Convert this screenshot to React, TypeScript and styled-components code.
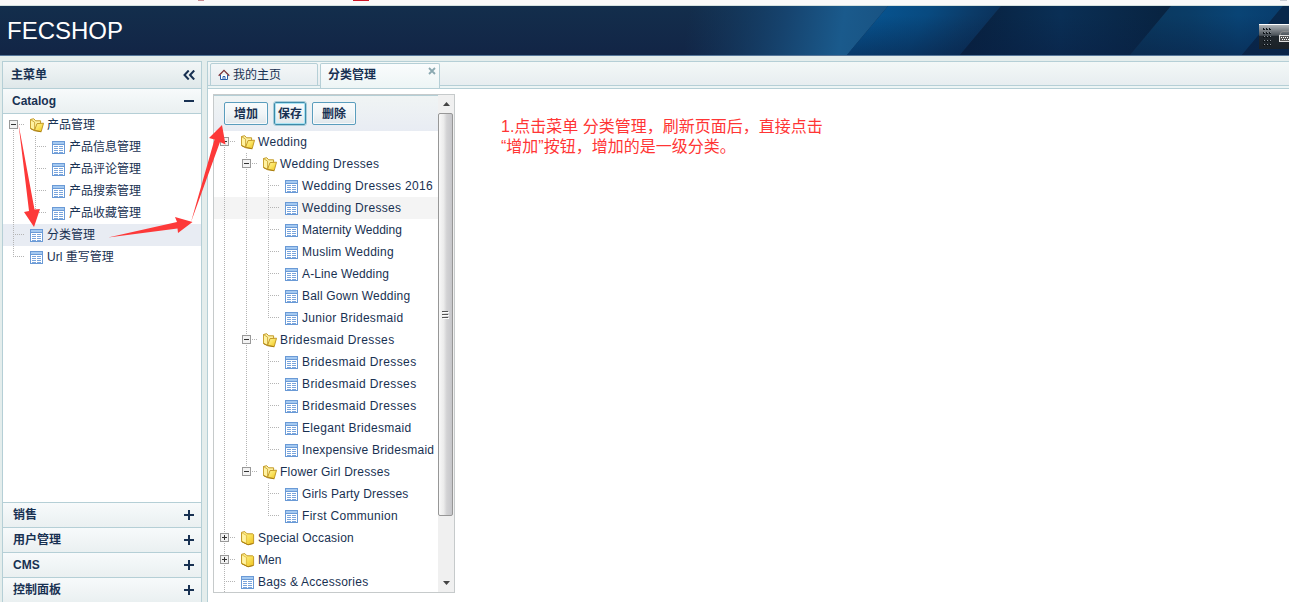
import React from 'react';
import styled, { createGlobalStyle, css } from 'styled-components';

const Global = createGlobalStyle`
  * { box-sizing: border-box; }
  html, body { margin: 0; padding: 0; overflow: hidden; }
  body { font: 12px/22px "Liberation Sans", "Noto Sans CJK SC", sans-serif; color: #183152; background: #e4edec; }
`;

const line = '#b5cfd6';

const Page = styled.div`
  position: relative;
  width: 1289px;
  height: 602px;
  display: flex;
  flex-direction: column;
  overflow: hidden;
`;
const BrowserEdge = styled.div`
  height: 6px;
  flex: none;
  background: #f9f9f9;
  border-bottom: 1px solid #d5e2e0;
  svg { display: block; }
`;
const Header = styled.header`
  position: relative;
  height: 50px;
  flex: none;
  border-bottom: 1px solid #56779a;
  background: #12294a;
  padding: 11px 7px 0;
`;
const Artwork = styled.svg`
  position: absolute;
  left: 0;
  top: 0;
`;
const Brand = styled.h1`
  position: relative;
  margin: 0;
  font-size: 24px;
  line-height: 28px;
  font-weight: 400;
  color: #fff;
`;
const Main = styled.div`
  flex: 1;
  min-height: 0;
  display: flex;
  gap: 5px;
  padding: 5px 0 0 2px;
`;

const Sidebar = styled.aside`
  width: 200px;
  flex: none;
  display: flex;
  flex-direction: column;
  border: 1px solid ${line};
  border-bottom: 0;
  background: #fff;
`;
const SideTitle = styled.div`
  height: 26px;
  flex: none;
  display: flex;
  align-items: center;
  justify-content: space-between;
  padding: 0 6px 0 8px;
  font-weight: 700;
  background: linear-gradient(#f2f6f7, #dfe8ea);
`;
const Section = styled.div<{ $open?: boolean }>`
  height: ${p => (p.$open ? 26 : 25)}px;
  flex: none;
  display: flex;
  align-items: center;
  justify-content: space-between;
  padding: 0 7px 0 ${p => (p.$open ? 9 : 10)}px;
  font-weight: 700;
  border-top: 1px solid ${line};
  ${p => p.$open && css`border-bottom: 1px solid ${line};`}
  background: linear-gradient(#f7fafb, #eaf0f1);
`;
const SideTree = styled.div`
  flex: 1;
  min-height: 0;
`;

const Workspace = styled.section`
  flex: 1;
  min-width: 0;
  display: flex;
  flex-direction: column;
  border: 1px solid ${line};
  border-width: 1px 0 0 1px;
  background: #fff;
`;
const TabBar = styled.div`
  height: 27px;
  flex: none;
  display: flex;
  gap: 2px;
  padding: 1px 2px 0;
  border-bottom: 1px solid ${line};
  background: linear-gradient(#f3f8f7, #e7edf0 23px, ${line} 23px, ${line} 24px, #edf5f5 24px);
`;
const Tab = styled.div<{ $active?: boolean; $w: number }>`
  width: ${p => p.$w}px;
  height: ${p => (p.$active ? 25 : 23)}px;
  display: flex;
  align-items: center;
  padding: 0 7px;
  gap: 3px;
  line-height: 22px;
  border: 1px solid ${line};
  border-radius: 2px 2px 0 0;
  background: linear-gradient(#f3f7f8, #e7edf0);
  ${p => p.$active && css`
    border-bottom: 0;
    font-weight: 700;
    background: linear-gradient(#fafcfd, #edf5f5);
    justify-content: space-between;
    align-items: flex-start;
    padding: 0 3px 0 7px;
  `}
`;
const CloseIcon = styled.svg`
  margin-top: 3px;
`;
const Content = styled.div`
  flex: 1;
  min-height: 0;
  display: flex;
  align-items: flex-start;
  padding: 5px;
`;
const Panel = styled.div`
  width: 242px;
  height: 499px;
  flex: none;
  display: flex;
  border: 1px solid #c6cacb;
  background: #fff;
`;
const PanelBody = styled.div`
  width: 224px;
  overflow: hidden;
`;
const Toolbar = styled.div`
  height: 36px;
  display: flex;
  align-items: flex-start;
  padding: 6px 10px 0;
  gap: 6px;
  border-top: 1px solid ${line};
  background: linear-gradient(#f0f4f4, #e8ecf3);
`;
const Button = styled.button<{ $focus?: boolean }>`
  width: ${p => (p.$focus ? 32 : 44)}px;
  height: 23px;
  padding: 0;
  border: 1px solid #5a9dbd;
  border-radius: 2px;
  font: inherit;
  line-height: 20px;
  font-weight: 700;
  color: #183152;
  background: linear-gradient(#f8fbfc, #f1f5f7 50%, #e0e7eb);
  box-shadow: inset 0 0 0 1px ${p => (p.$focus ? '#a8e3f4' : '#f8fafb')};
  ${p => p.$focus && css`outline: 1px solid #a9ccd9; border-color: #3d8aa9;`}
`;

const Row = styled.div<{ $bg?: string; }>`
  height: 22px;
  display: flex;
  align-items: center;
  white-space: nowrap;
  background: ${p => p.$bg || 'transparent'};
  svg { flex: none; display: block; }
`;
const Label = styled.span<{ $track?: number }>`
  letter-spacing: ${p => p.$track || 0}px;
`;

const Scrollbar = styled.div`
  width: 16px;
  height: 497px;
  display: flex;
  flex-direction: column;
  align-items: center;
  background: #f0f0f0;
`;
const ScrollEnd = styled.div`
  height: 18px;
  display: flex;
  align-items: center;
  justify-content: center;
`;
const Thumb = styled.div`
  width: 15px;
  height: 403px;
  align-self: flex-start;
  display: flex;
  align-items: center;
  justify-content: center;
  border: 1px solid #979797;
  border-radius: 2px;
  background: linear-gradient(90deg, #f8f8f8, #ececec 35%, #d2d2d4 60%, #c6c6ca);
`;
const Spacer = styled.div`
  flex: 1;
`;
const Note = styled.p`
  margin: 23px 0 0 46px;
  font: 400 16px/20px "Liberation Sans", "Noto Sans CJK SC", sans-serif;
  color: #ff3535;
  white-space: nowrap;
`;
const Arrows = styled.svg`
  position: absolute;
  left: 0;
  top: 0;
  pointer-events: none;
`;

type Cell = '|' | ' ' | '+' | '-' | 'T' | 'L' | 'f' | 'l' | 'm';

/* Guide cells: | line, T branch, L last branch, + closed, f first open, m middle open, l last open */
function Guide({ kind }: { kind: Cell }) {
  const box = '+fml'.includes(kind);
  const up = '|T+mlL'.includes(kind);
  const down = '|T+fm'.includes(kind);
  const dots = { stroke: '#b4b4b4', strokeWidth: 1, strokeDasharray: '1 1' };
  return (
    <svg width="22" height="22" shapeRendering="crispEdges">
      {up && <path d="M10.5 0V11" {...dots} />}
      {down && <path d="M10.5 12V22" {...dots} />}
      {'TL'.includes(kind) && <path d="M10 10.5H21" {...dots} />}
      {box && (
        <>
          <path d="M16 10.5H21" {...dots} />
          <rect x="6.5" y="6.5" width="8" height="8" fill="#f3f3f3" stroke="#999" />
          <path d="M8 10.5H13" stroke="#333" />
          {kind === '+' && <path d="M10.5 8V13" stroke="#333" />}
        </>
      )}
    </svg>
  );
}

function Gold() {
  return (
    <defs>
      <linearGradient id="gold" x2="1" y2="1">
        <stop stopColor="#fff3a0" />
        <stop offset=".5" stopColor="#fae25c" />
        <stop offset="1" stopColor="#edbf1c" />
      </linearGradient>
    </defs>
  );
}
function OpenFolder() {
  return (
    <svg width="22" height="22" viewBox="0 0 22 22">
      <path d="M5.5 14.5V5.5L8.7 4.7L10.7 6.8H15.6V9.5L14 16Z" fill="#fdf0a0" stroke="#c39a28" strokeLinejoin="round" />
      <path d="M5.5 5.5L9.6 8.2V16.3L5.5 14.3Z" fill="#fff2a0" stroke="#c39a28" strokeWidth=".8" strokeLinejoin="round" />
      <path d="M9.6 16.2L12 9.6L18.5 9.2L16.2 17.6Z" fill="url(#gold)" stroke="#c39a28" strokeLinejoin="round" />
      <path d="M5.6 14.7L9.6 16.7L16.2 17.8" fill="none" stroke="#ab7f10" />
    </svg>
  );
}
function ClosedFolder() {
  return (
    <svg width="22" height="22" viewBox="0 0 22 22">
      <path d="M5.5 14.4V5.3L8.8 4.6L11 6.8H16.7L17.6 7.6V16.2L12 17.7Z" fill="url(#gold)" stroke="#c39a28" strokeLinejoin="round" />
      <path d="M6 5.9L10.6 8.5V16.2" fill="none" stroke="#d9b03a" strokeWidth=".7" />
      <path d="M6.3 6.7L9.8 8.8V15.6L6.3 13.8Z" fill="#fff3a6" />
      <path d="M5.6 14.7L12 17.8L17.5 16.5" fill="none" stroke="#ab7f10" />
    </svg>
  );
}
function Sheet() {
  return (
    <svg width="22" height="22" shapeRendering="crispEdges">
      <rect x="5.5" y="5.5" width="12" height="12" fill="#fff" stroke="#6a9ad6" />
      <rect x="6" y="6" width="11" height="2" fill="#a4c9f1" />
      <path d="M6 8.5H17" stroke="#6a9ad6" />
      <path d="M7 10.5H11M12 10.5H16M7 12.5H11M12 12.5H16M7 14.5H11M12 14.5H16M7 16.5H11M12 16.5H16" stroke="#7aa5dc" />
    </svg>
  );
}

type Node = { g: string; icon: 'o' | 'c' | 's'; text: string; track?: number; bg?: string };

const menu: Node[] = [
  { g: 'f', icon: 'o', text: '产品管理' },
  { g: '|T', icon: 's', text: '产品信息管理' },
  { g: '|T', icon: 's', text: '产品评论管理' },
  { g: '|T', icon: 's', text: '产品搜索管理' },
  { g: '|L', icon: 's', text: '产品收藏管理' },
  { g: 'T', icon: 's', text: '分类管理', bg: '#e8ecf3' },
  { g: 'L', icon: 's', text: 'Url 重写管理' },
];

const categories: Node[] = [
  { g: 'f', icon: 'o', text: 'Wedding', track: 0.3 },
  { g: '|m', icon: 'o', text: 'Wedding Dresses', track: 0.33 },
  { g: '||T', icon: 's', text: 'Wedding Dresses 2016', track: 0.33 },
  { g: '||T', icon: 's', text: 'Wedding Dresses', track: 0.33, bg: '#f4f4f4' },
  { g: '||T', icon: 's', text: 'Maternity Wedding' },
  { g: '||T', icon: 's', text: 'Muslim Wedding', track: 0.24 },
  { g: '||T', icon: 's', text: 'A-Line Wedding', track: 0.13 },
  { g: '||T', icon: 's', text: 'Ball Gown Wedding', track: 0.18 },
  { g: '||L', icon: 's', text: 'Junior Bridesmaid', track: 0.32 },
  { g: '|m', icon: 'o', text: 'Bridesmaid Dresses', track: 0.4 },
  { g: '||T', icon: 's', text: 'Bridesmaid Dresses', track: 0.4 },
  { g: '||T', icon: 's', text: 'Bridesmaid Dresses', track: 0.4 },
  { g: '||T', icon: 's', text: 'Bridesmaid Dresses', track: 0.4 },
  { g: '||T', icon: 's', text: 'Elegant Bridesmaid', track: 0.3 },
  { g: '||L', icon: 's', text: 'Inexpensive Bridesmaid', track: 0.22 },
  { g: '|l', icon: 'o', text: 'Flower Girl Dresses', track: 0.24 },
  { g: '| T', icon: 's', text: 'Girls Party Dresses', track: 0.16 },
  { g: '| L', icon: 's', text: 'First Communion', track: 0.3 },
  { g: '+', icon: 'c', text: 'Special Occasion', track: 0.2 },
  { g: '+', icon: 'c', text: 'Men' },
  { g: 'T', icon: 's', text: 'Bags & Accessories', track: 0.24 },
];

function Tree({ nodes }: { nodes: Node[] }) {
  return (
    <>
      {nodes.map((n, i) => (
        <Row key={i} $bg={n.bg}>
          {n.g.split('').map((c, j) => <Guide key={j} kind={c as Cell} />)}
          {n.icon === 'o' ? <OpenFolder /> : n.icon === 'c' ? <ClosedFolder /> : <Sheet />}
          <Label $track={n.track}>{n.text}</Label>
        </Row>
      ))}
    </>
  );
}

function Sign({ plus }: { plus?: boolean }) {
  return (
    <svg width="10" height="10" shapeRendering="crispEdges">
      <rect x="0" y="4" width="10" height="2" fill="#183152" />
      {plus && <rect x="4" y="0" width="2" height="10" fill="#183152" />}
    </svg>
  );
}

function HeaderArt() {
  return (
    <Artwork width="1289" height="49">
      <Gold />
      <defs>
        <linearGradient id="base" x2="0" y2="1"><stop stopColor="#132e4c" /><stop offset="1" stopColor="#122546" /></linearGradient>
        <linearGradient id="s1" gradientUnits="userSpaceOnUse" x1="690" y1="0" x2="880" y2="30">
          <stop stopColor="#133c62" stopOpacity="0" /><stop offset=".5" stopColor="#16436e" /><stop offset=".8" stopColor="#1a5a8c" /><stop offset="1" stopColor="#195484" />
        </linearGradient>
        <linearGradient id="s2" gradientUnits="userSpaceOnUse" x1="875" y1="0" x2="985" y2="60">
          <stop stopColor="#075490" /><stop offset=".4" stopColor="#084a80" /><stop offset=".7" stopColor="#0b3b68" /><stop offset="1" stopColor="#0a2d55" />
        </linearGradient>
        <linearGradient id="s3" gradientUnits="userSpaceOnUse" x1="970" y1="0" x2="1170" y2="0">
          <stop stopColor="#08213f" /><stop offset=".45" stopColor="#0a2f55" /><stop offset="1" stopColor="#082340" />
        </linearGradient>
        <linearGradient id="s4" gradientUnits="userSpaceOnUse" x1="1140" y1="0" x2="1280" y2="0">
          <stop stopColor="#0a385e" /><stop offset=".35" stopColor="#0a3c66" /><stop offset=".7" stopColor="#094475" /><stop offset="1" stopColor="#083d6d" />
        </linearGradient>
        <linearGradient id="shade" x2="0" y2="1"><stop offset=".2" stopColor="#091f44" stopOpacity="0" /><stop offset="1" stopColor="#091f44" stopOpacity=".5" /></linearGradient>
        <linearGradient id="dock" x2="0" y2="1"><stop stopColor="#b9bdc0" /><stop offset=".45" stopColor="#4a5158" /><stop offset=".5" stopColor="#20272d" /><stop offset="1" stopColor="#1b2127" /></linearGradient>
      </defs>
      <rect width="1289" height="49" fill="url(#base)" />
      <path d="M680 0H888L847 49H680Z" fill="url(#s1)" />
      <path d="M888 0H1001L960 49H847Z" fill="url(#s2)" />
      <path d="M1001 0H1171L1130 49H960Z" fill="url(#s3)" />
      <path d="M1171 0H1283L1242 49H1130Z" fill="url(#s4)" />
      <path d="M1283 0H1289V49H1242Z" fill="#08284b" />
      <path d="M888 0H1289V49H847Z" fill="url(#shade)" />
      <rect x="1259" y="18" width="30" height="25" fill="url(#dock)" />
      <rect x="1259" y="18" width="30" height="1" fill="#fff" />
      {[22, 26, 30, 34, 38].map(y => [1263, 1266, 1269].map(x => (
        <g key={`${x}-${y}`}><rect x={x} y={y} width="2" height="2" fill="#10161b" /><rect x={x + 1} y={y} width="1" height="1" fill="#8b9298" /></g>
      )))}
      <path d="M1280 29C1281 23 1286 27 1289 25" fill="none" stroke="#8f8f8f" />
      <rect x="1279.5" y="29.5" width="12" height="6" fill="#555" stroke="#ddd" />
      <path d="M1281 31.5H1289M1282 33.5H1289" stroke="#fff" strokeDasharray="1 1" />
    </Artwork>
  );
}

export default function App() {
  return (
    <Page>
      <Global />
      <BrowserEdge>
        <svg width="1289" height="1">
          <rect x="198" width="6" height="1" fill="#c98d93" />
          <rect x="353" width="16" height="1" fill="#cc1525" />
          <rect x="1280" width="7" height="1" fill="#c8ccd2" />
        </svg>
      </BrowserEdge>
      <Header>
        <HeaderArt />
        <Brand>FECSHOP</Brand>
      </Header>
      <Main>
        <Sidebar>
          <SideTitle>
            主菜单
            <svg width="12" height="10" fill="none" stroke="#183152" strokeWidth="2"><path d="M5.7.5L1.5 5L5.7 9.5M11.2.5L7 5L11.2 9.5" /></svg>
          </SideTitle>
          <Section $open>Catalog<Sign /></Section>
          <SideTree><Tree nodes={menu} /></SideTree>
          {['销售', '用户管理', 'CMS', '控制面板'].map(s => <Section key={s}>{s}<Sign plus /></Section>)}
        </Sidebar>
        <Workspace>
          <TabBar>
            <Tab $w={108}>
              <svg width="12" height="12" fill="none">
                <path d="M2.5 6V10.5H9.5V6" fill="#fff" stroke="#2a5cab" />
                <path d="M5 10.5V7.5H7V10.5" stroke="#2a5cab" />
                <path d="M.7 6.7L6 1.4L11.3 6.7" stroke="#7c2f35" strokeWidth="1.3" />
              </svg>
              我的主页
            </Tab>
            <Tab $active $w={120}>
              分类管理
              <CloseIcon width="8" height="8" stroke="#8ba9b1" strokeWidth="1.8"><path d="M1 1L7 7M7 1L1 7" /></CloseIcon>
            </Tab>
          </TabBar>
          <Content>
            <Panel>
              <PanelBody>
                <Toolbar>
                  <Button>增加</Button>
                  <Button $focus>保存</Button>
                  <Button>删除</Button>
                </Toolbar>
                <Tree nodes={categories} />
              </PanelBody>
              <Scrollbar>
                <ScrollEnd><svg width="7" height="4"><path d="M0 4L3.5 0L7 4Z" fill="#444" /></svg></ScrollEnd>
                <Thumb><svg width="7" height="8" shapeRendering="crispEdges"><path d="M0 .5H6M0 3.5H6M0 6.5H6" stroke="#555" /><path d="M1 1.5H7M1 4.5H7M1 7.5H7" stroke="#fff" /></svg></Thumb>
                <Spacer />
                <ScrollEnd><svg width="7" height="4"><path d="M0 0L3.5 4L7 0Z" fill="#444" /></svg></ScrollEnd>
              </Scrollbar>
            </Panel>
            <Note>1.点击菜单 分类管理，刷新页面后，直接点击<br />“增加”按钮，增加的是一级分类。</Note>
          </Content>
        </Workspace>
      </Main>
      <Arrows width="1289" height="602" fill="#fd3939">
        <path d="M18.5 124L34.5 209.5L40 209L34 227L24 212L29 211Z" />
        <path d="M108 237.5L177 222L175 217L192.5 222L178 233L177.5 228.5Z" />
        <path d="M191 222L214.5 139.5L209 138L222 125L225.5 144.5L220 142Z" />
      </Arrows>
    </Page>
  );
}
